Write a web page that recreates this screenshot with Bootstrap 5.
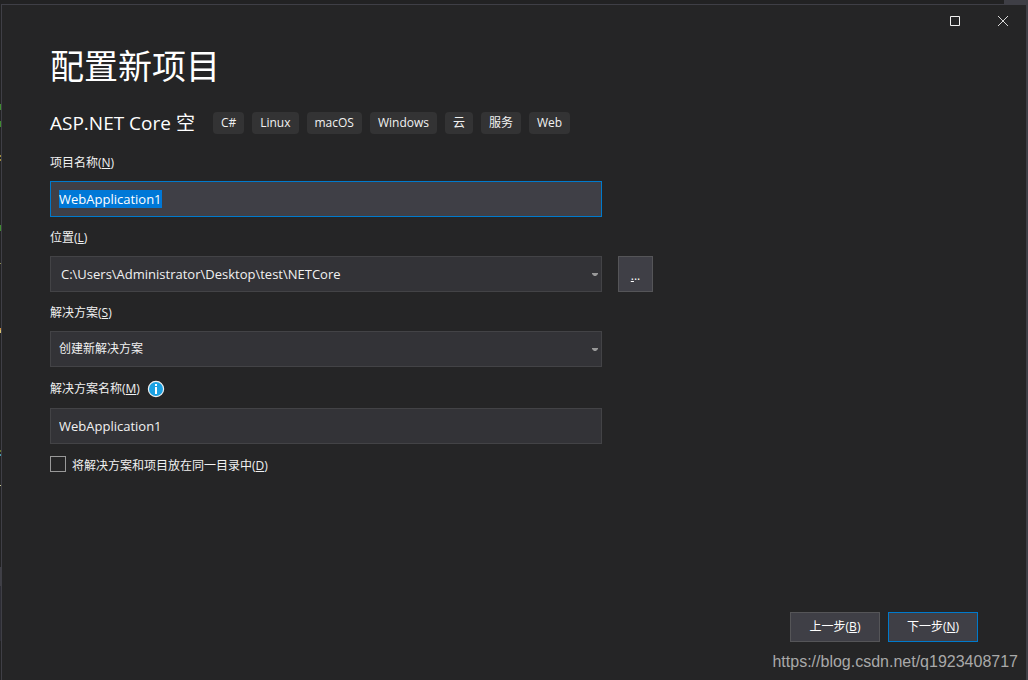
<!DOCTYPE html>
<html lang="zh-CN" data-bs-theme="dark">
<head>
<meta charset="utf-8">
<meta name="viewport" content="width=device-width, initial-scale=1">
<title>配置新项目</title>
<link href="https://cdn.jsdelivr.net/npm/bootstrap@5.3.0/dist/css/bootstrap.min.css" rel="stylesheet">
<style>
  body {
    background: #222223;
    color: #f1f1f1;
    font-family: "Open Sans", "Noto Sans CJK SC", sans-serif;
    font-size: 12px;
    line-height: 18px;
  }
  /* sliver of the editor window around the dialog */
  .backdrop {
    padding: 4px 2px 0 1px;
    background:
      linear-gradient(#3f3f46, #3f3f46) right top / 24px 4px no-repeat,
      linear-gradient(#3f3f46, #3f3f46) right top / 2px 100% no-repeat,
      linear-gradient(#222223 104px, #3f8c30 104px 110px, #222223 110px 121px, #3f8c30 121px 127px,
        #222223 127px 155px, #a08c3c 155px 157px, #222223 157px 159px, #a08c3c 159px 161px,
        #222223 161px 225px, #3f8c30 225px 231px, #222223 231px 263px, #8c8c50 263px 264px,
        #222223 264px 328px, #d09040 328px 330px, #d8c070 330px 333px, #222223 333px 450px,
        #6c7a2c 450px 452px, #222223 452px 454px, #4a9ab0 454px 456px, #222223 456px 485px,
        #c8c890 485px 486px, #222223 486px 567px, #3f3f46 567px 586px, #2d2d35 586px 641px, #222223 641px);
  }
  .dialog {
    background: #252526;
    border: solid #3f3f46;
    border-width: 1px 0 0 1px;
  }
  .caption-bar { height: 32px; padding-right: 17px; gap: 36px; }
  .caption-btn { background: none; border: 0; padding: 0; width: 12px; height: 12px; display: flex; }
  .content { padding: 4px 48px 0; }
  .page-title { font-size: 34px; line-height: 50px; font-weight: 400; margin: 0 0 18px; }
  .template-row { margin-bottom: 17px; }
  .template-name { font-size: 19px; line-height: 28px; font-weight: 400; margin: 0 10px 0 0; }
  .tag { background: #333334; border-radius: 4px; padding: 0 8px; height: 22px; line-height: 22px; }
  .fields { display: grid; gap: 12px; }
  .field { display: grid; gap: 9px; }
  .field-set { max-width: 552px; }
  .form-label { margin: 0; line-height: 18px; }
  .info-row { gap: 7px; height: 20px; }
  .form-control.box, .form-select.box {
    height: 36px;
    border: 1px solid #434346;
    border-radius: 0;
    background-color: #333337;
    color: #f1f1f1;
    font-size: 13px;
    line-height: 18px;
    padding: 8px;
    box-shadow: none;
  }
  .form-select.box {
    --bs-form-select-bg-img: url("data:image/svg+xml,%3Csvg xmlns='http://www.w3.org/2000/svg' viewBox='0 0 6 3'%3E%3Cpath fill='%23999' d='M0 0h6v1L4 3H2L0 1z'/%3E%3C/svg%3E");
    background-size: 6px 3px;
    background-position: right 3px center;
    padding-right: 20px;
  }
  .form-select.path { padding-left: 10px; }
  .form-select.cjk { font-size: 12px; }
  .form-control.box.active, .form-control.box:focus { border-color: #007acc; background-color: #3f3f46; }
  .box::selection { background: #0078d7; color: #fff; }
  .tool-btn {
    background: #3f3f46;
    border: 1px solid #555558;
    border-radius: 0;
    color: #fff;
    padding: 0;
    font-size: 12px;
    line-height: 18px;
  }
  .browse { width: 35px; height: 36px; padding-top: 4px; }
  .step { width: 90px; height: 30px; }
  .step.primary { border-color: #007acc; }
  .check-row { gap: 6px; }
  .check-row .form-label { line-height: 20px; }
  .form-check-input.tick { width: 16px; height: 16px; margin: 0; float: none; background-color: #252526; border: 1px solid #999; border-radius: 0; }
  .footer-bar { padding: 0 48px 7px; }
  .watermark { font: 16px/26px "Liberation Sans", sans-serif; color: #a9a9a9; padding: 0 8px 5px 0; }
  .watermark a { color: inherit; text-decoration: none; }
</style>
<script src="https://cdn.jsdelivr.net/npm/bootstrap@5.3.0/dist/js/bootstrap.bundle.min.js"></script>
</head>
<body>
<div class="backdrop min-vh-100 d-flex">
  <main class="dialog flex-grow-1 d-flex flex-column">
    <div class="caption-bar d-flex justify-content-end align-items-center">
      <button type="button" class="caption-btn" aria-label="最大化">
        <svg width="12" height="12" viewBox="0 0 12 12"><path d="M1.5 1.5h9v9h-9z" fill="none" stroke="#f1f1f1"/></svg>
      </button>
      <button type="button" class="caption-btn" aria-label="关闭">
        <svg width="12" height="12" viewBox="0 0 12 12"><path d="M1 1l10 10M11 1L1 11" fill="none" stroke="#d8d8d8"/></svg>
      </button>
    </div>
    <form class="flex-grow-1 d-flex flex-column" onsubmit="return false">
      <div class="content flex-grow-1">
        <h1 class="page-title">配置新项目</h1>
        <div class="template-row d-flex align-items-center flex-wrap gap-2">
          <h2 class="template-name">ASP.NET Core 空</h2>
          <span class="tag">C#</span>
          <span class="tag">Linux</span>
          <span class="tag">macOS</span>
          <span class="tag">Windows</span>
          <span class="tag">云</span>
          <span class="tag">服务</span>
          <span class="tag">Web</span>
        </div>

        <div class="fields">
          <div class="field field-set">
            <label class="form-label" for="projectName">项目名称(<u>N</u>)</label>
            <input class="form-control box active" id="projectName" value="WebApplication1">
          </div>

          <div class="field">
            <label class="form-label" for="location">位置(<u>L</u>)</label>
            <div class="d-flex gap-3">
              <div class="field-set flex-grow-1">
                <select class="form-select box path" id="location"><option>C:\Users\Administrator\Desktop\test\NETCore</option></select>
              </div>
              <button type="button" class="btn tool-btn browse" aria-label="浏览"><u>.</u>..</button>
            </div>
          </div>

          <div class="field field-set">
            <label class="form-label" for="solution">解决方案(<u>S</u>)</label>
            <select class="form-select box cjk" id="solution"><option>创建新解决方案</option></select>
          </div>

          <div class="field field-set">
            <div class="info-row d-flex align-items-center">
              <label class="form-label" for="solutionName">解决方案名称(<u>M</u>)</label>
              <svg width="18" height="18" viewBox="0 0 18 18" role="img" aria-label="信息">
                <circle cx="9" cy="9" r="7.6" fill="#1ba1e2" stroke="#f1f1f1" stroke-width="1.2"/>
                <path d="M8 4h2v2H8zM8 7h2v7H8z" fill="#fff"/>
              </svg>
            </div>
            <input class="form-control box" id="solutionName" value="WebApplication1">
          </div>

          <div class="check-row d-flex">
            <input class="form-check-input tick" type="checkbox" id="sameDir">
            <label class="form-label" for="sameDir">将解决方案和项目放在同一目录中(<u>D</u>)</label>
          </div>
        </div>
      </div>
      <div class="footer-bar d-flex justify-content-end gap-2">
        <button type="button" class="btn tool-btn step">上一步(<u>B</u>)</button>
        <button type="submit" class="btn tool-btn step primary">下一步(<u>N</u>)</button>
      </div>
    </form>
    <footer class="watermark text-end"><a href="https://blog.csdn.net/q1923408717">https://blog.csdn.net/q1923408717</a></footer>
  </main>
</div>
<script>
  // The dialog opens with the project name ready to be overwritten.
  const projectName = document.getElementById('projectName');
  projectName.focus();
  projectName.select();
</script>
</body>
</html>
